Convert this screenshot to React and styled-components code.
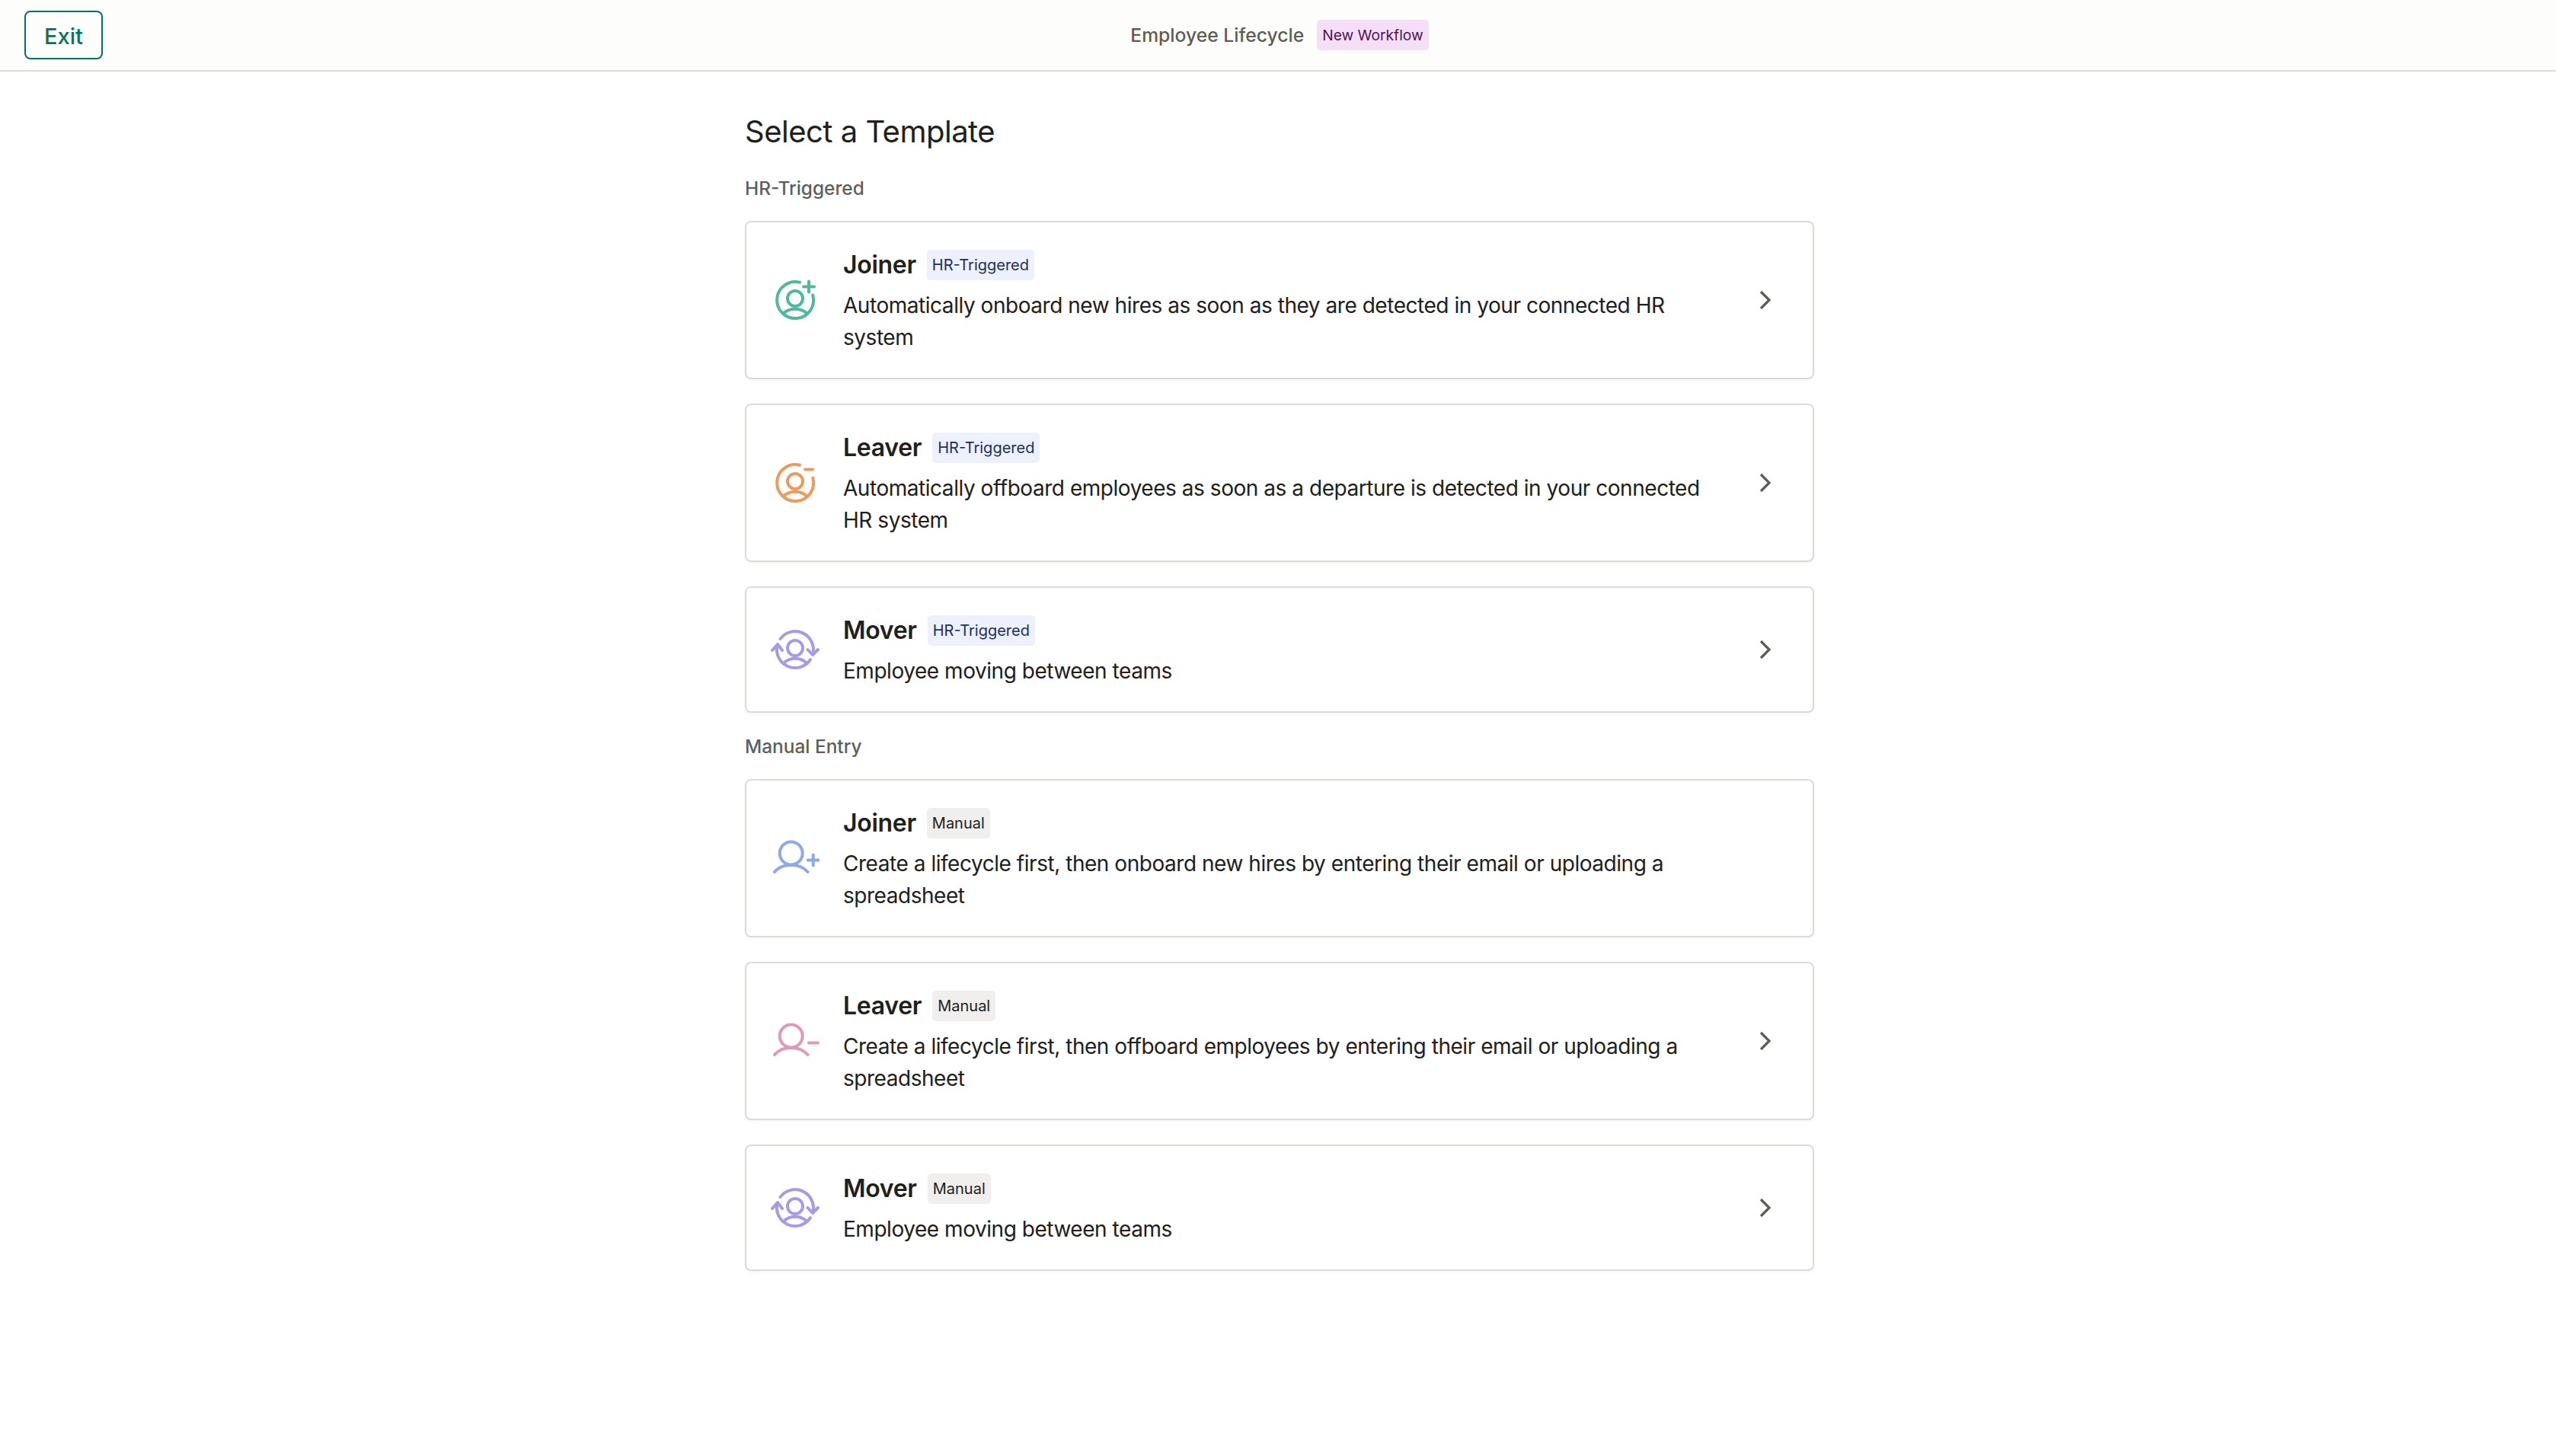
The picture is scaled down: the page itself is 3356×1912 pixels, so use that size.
import React from "react";
import styled, { createGlobalStyle } from "styled-components";

const Global = createGlobalStyle`
  html, body { margin: 0; padding: 0; background: #fff; }
  body { font-family: Inter, "Noto Sans", "Liberation Sans", sans-serif; color: #20201c; overflow-x: hidden; }
  * { box-sizing: border-box; }
`;

const Page = styled.div`
  display: flex;
  flex-direction: column;
  min-height: 1912px;
`;

const TopBar = styled.header`
  display: grid;
  grid-template-columns: 1fr auto 1fr;
  align-items: center;
  height: 94px;
  padding: 0 28px 0 32px;
  background: #fdfdfb;
  border-bottom: 2px solid #dcdcd7;
`;

const ExitButton = styled.button`
  justify-self: start;
  width: 103px;
  height: 64px;
  padding: 2px 0 0;
  border: 2px solid #00755f;
  border-radius: 8px;
  background: transparent;
  color: #00755f;
  font: 500 29px/1 Inter, sans-serif;
`;

const Crumb = styled.div`
  display: flex;
  align-items: center;
  gap: 17px;
`;

const CrumbTitle = styled.span`
  font-size: 24.7px;
  font-weight: 500;
  color: #5d5d58;
`;

const Badge = styled.span`
  display: inline-flex;
  align-items: center;
  height: 40px;
  padding: 0 7px;
  border-radius: 5px;
  font-size: 20px;
  font-weight: 400;
  white-space: nowrap;
  background: ${(p) => p.$bg};
  color: ${(p) => p.$fg};
`;

const StatusBadge = styled(Badge)`
  font-size: 19.2px;
`;

const Main = styled.main`
  display: flex;
  justify-content: center;
  padding-left: 4px;
`;

const Column = styled.div`
  width: 1404px;
  display: flex;
  flex-direction: column;
  padding-top: 49px;
`;

const Heading = styled.h1`
  margin: 0 0 26px;
  font-size: 40px;
  line-height: 60px;
  font-weight: 400;
  letter-spacing: -0.5px;
  color: #20201c;
`;

const SectionLabel = styled.h2`
  margin: 0 0 25px;
  font-size: 24.4px;
  line-height: 36px;
  font-weight: 500;
  color: #5f5f5a;
`;

const CardList = styled.div`
  display: flex;
  flex-direction: column;
  gap: 32px;
  margin-bottom: 26px;
`;

const Card = styled.article`
  display: flex;
  align-items: center;
  gap: 32px;
  padding: 32px 40px 32px 32px;
  border: 2px solid #dcdcd7;
  border-radius: 8px;
  background: #fff;
  box-shadow: 0 2px 4px rgba(30, 30, 20, 0.04);
`;

const IconBox = styled.div`
  flex: none;
  width: 64px;
  height: 64px;
  color: ${(p) => p.$color};
  svg { display: block; width: 64px; height: 64px; }
`;

const Body = styled.div`
  flex: 1;
  min-width: 0;
`;

const TitleRow = styled.div`
  display: flex;
  align-items: center;
  gap: 14px;
  height: 48px;
  margin-bottom: 8px;
`;

const CardTitle = styled.h3`
  margin: 0 0 0 -1px;
  font-size: 32px;
  line-height: 48px;
  font-weight: 600;
  letter-spacing: -0.3px;
  color: #20201c;
`;

const Description = styled.p`
  margin: 0 0 0 -1px;
  max-width: 1140px;
  font-size: 28px;
  line-height: 42px;
  letter-spacing: -0.46px;
  color: #20201c;
`;

const ChevronBox = styled.div`
  flex: none;
  width: 16px;
  height: 26px;
  margin: -1px 14px 0 0;
  color: #5c5c56;
  svg { display: block; width: 16px; height: 26px; }
`;

const Line = (props) => (
  <svg viewBox="0 0 64 64" fill="none" stroke="currentColor" strokeWidth="4" strokeLinecap="round" strokeLinejoin="round" {...props} />
);

const RingPerson = ({ children }) => (
  <Line>
    <path d="M38 8.8A24 24 0 1 0 55.2 25.5" />
    <circle cx="32" cy="30" r="10" />
    <path d="M16.5 50C20 46 26 43.8 32 43.8s12 2.2 15.5 6.2" />
    {children}
  </Line>
);

const JoinerRing = () => <RingPerson><path d="M50 7.5v14M43 14.5h14" /></RingPerson>;
const LeaverRing = () => <RingPerson><path d="M45 14.5h10" /></RingPerson>;

const MoverIcon = () => (
  <Line>
    <path d="M12.5 18A24 24 0 0 1 55.2 38" />
    <path d="M8.7 26A24 24 0 0 0 52 45.2" />
    <circle cx="32" cy="30" r="10" />
    <path d="M17 50C20.5 46 26 43.8 32 43.8s11.5 2.2 15 6.2" />
    <path d="M2 33l7-8 6 8" />
    <path d="M48.5 32l6.5 7 7-7" />
  </Line>
);

const PersonPlain = ({ children }) => (
  <Line>
    <circle cx="26.7" cy="25.5" r="15" />
    <path d="M5 50C10 44 18 41 26.7 41s16.7 3 21.8 9" />
    {children}
  </Line>
);

const JoinerPlain = () => <PersonPlain><path d="M55.7 27.5v14M48.7 34.5h14" /></PersonPlain>;
const LeaverPlain = () => <PersonPlain><path d="M50 34.5h12" /></PersonPlain>;

const Chevron = () => (
  <svg viewBox="0 0 16 26" fill="none" stroke="currentColor" strokeWidth="3.2">
    <path d="M2 2l11 11L2 24" />
  </svg>
);

const HR = { label: "HR-Triggered", bg: "#edf1fd", fg: "#1d2e63" };
const MANUAL = { label: "Manual", bg: "#f0efed", fg: "#22221f" };

const sections = [
  {
    label: "HR-Triggered",
    cards: [
      { title: "Joiner", badge: HR, color: "#4fb9a0", Icon: JoinerRing, chevron: true, text: "Automatically onboard new hires as soon as they are detected in your connected HR system" },
      { title: "Leaver", badge: HR, color: "#ee9a5a", Icon: LeaverRing, chevron: true, text: "Automatically offboard employees as soon as a departure is detected in your connected HR system" },
      { title: "Mover", badge: HR, color: "#a99ae8", Icon: MoverIcon, chevron: true, text: "Employee moving between teams" },
    ],
  },
  {
    label: "Manual Entry",
    cards: [
      { title: "Joiner", badge: MANUAL, color: "#8ea8ee", Icon: JoinerPlain, chevron: false, text: "Create a lifecycle first, then onboard new hires by entering their email or uploading a spreadsheet" },
      { title: "Leaver", badge: MANUAL, color: "#e298b8", Icon: LeaverPlain, chevron: true, text: "Create a lifecycle first, then offboard employees by entering their email or uploading a spreadsheet" },
      { title: "Mover", badge: MANUAL, color: "#a99ae8", Icon: MoverIcon, chevron: true, text: "Employee moving between teams" },
    ],
  },
];

export default function App() {
  return (
    <Page>
      <Global />
      <TopBar>
        <ExitButton>Exit</ExitButton>
        <Crumb>
          <CrumbTitle>Employee Lifecycle</CrumbTitle>
          <StatusBadge $bg="#f5dff7" $fg="#4f1457">New Workflow</StatusBadge>
        </Crumb>
        <span />
      </TopBar>
      <Main>
        <Column>
          <Heading>Select a Template</Heading>
          {sections.map((s) => (
            <section key={s.label}>
              <SectionLabel>{s.label}</SectionLabel>
              <CardList>
                {s.cards.map((c) => (
                  <Card key={c.title}>
                    <IconBox $color={c.color}><c.Icon /></IconBox>
                    <Body>
                      <TitleRow>
                        <CardTitle>{c.title}</CardTitle>
                        <Badge $bg={c.badge.bg} $fg={c.badge.fg}>{c.badge.label}</Badge>
                      </TitleRow>
                      <Description>{c.text}</Description>
                    </Body>
                    {c.chevron && <ChevronBox><Chevron /></ChevronBox>}
                  </Card>
                ))}
              </CardList>
            </section>
          ))}
        </Column>
      </Main>
    </Page>
  );
}
